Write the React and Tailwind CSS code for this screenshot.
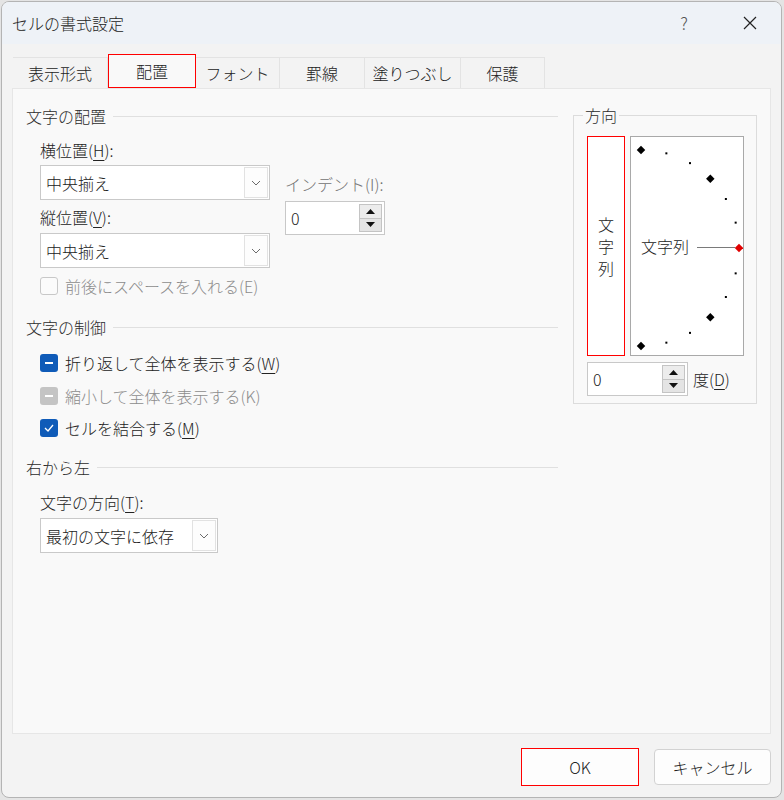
import React from "react";

const FONT = { fontFamily: '"Noto Sans CJK JP", "Noto Sans", sans-serif' };

function Chevron() {
  return (
    <svg width="10" height="6" viewBox="0 0 10 6">
      <polyline points="1,1 5,5 9,1" fill="none" stroke="#6b6b6b" strokeWidth="1" />
    </svg>
  );
}

function Select({ value, width }) {
  return (
    <div className={`flex items-center h-[35px] bg-white border border-[#c9c9c9] ${width}`}>
      <span className="flex-1 pl-[5px] text-[16px] leading-[20px] text-[#222]">{value}</span>
      <div className="flex items-center justify-center w-[24px] h-[31px] mr-[1px] bg-[#fdfdfd] border border-[#e2e2e2]">
        <Chevron />
      </div>
    </div>
  );
}

function Spin({ width }) {
  return (
    <div className={`flex items-center h-[34px] bg-white border border-[#c8c8c8] ${width}`}>
      <span className="flex-1 pl-[5px] text-[16px] leading-[20px] text-[#222]">0</span>
      <div className="flex flex-col w-[23px] h-[28px] mr-[2px] border border-[#c4c4c4]">
        <div className="flex-1 flex items-center justify-center bg-[#ececec] border-b border-[#c4c4c4]">
          <svg width="9" height="5" viewBox="0 0 9 5"><polygon points="0,5 9,5 4.5,0" fill="#111" /></svg>
        </div>
        <div className="flex-1 flex items-center justify-center bg-[#e4e4e4]">
          <svg width="9" height="5" viewBox="0 0 9 5"><polygon points="0,0 9,0 4.5,5" fill="#111" /></svg>
        </div>
      </div>
    </div>
  );
}

function SectionHeader({ children }) {
  return (
    <div className="flex items-center gap-[7px] h-[20px]">
      <span className="text-[16px] leading-[20px] text-[#2b2b2b]">{children}</span>
      <div className="flex-1 h-px bg-[#e0e0e0]" />
    </div>
  );
}

function CheckRow({ state, disabled, children, className }) {
  let box;
  if (state === "dash") {
    box = (
      <div className={`w-[18px] h-[18px] rounded-[3px] flex items-center justify-center ${disabled ? "bg-[#c4c4c4]" : "bg-[#0f5bb8]"}`}>
        <div className="w-[8px] h-[2px] bg-white" />
      </div>
    );
  } else if (state === "check") {
    box = (
      <div className="w-[18px] h-[18px] rounded-[3px] flex items-center justify-center bg-[#0f5bb8]">
        <svg width="10" height="8" viewBox="0 0 10 8">
          <polyline points="1,4 4,7 9,1" fill="none" stroke="white" strokeWidth="1.3" />
        </svg>
      </div>
    );
  } else {
    box = <div className="w-[18px] h-[18px] rounded-[3px] border border-[#c8c8c8] bg-[#fbfbfb]" />;
  }
  return (
    <div className={`flex items-center gap-[7px] h-[20px] ${className || ""}`}>
      {box}
      <span className={`text-[16px] leading-[20px] ${disabled ? "text-[#8c8c8c]" : "text-[#222]"}`}>{children}</span>
    </div>
  );
}

function Dial() {
  const cx = 10;
  const cy = 111;
  const r = 98;
  const marks = [];
  for (let a = -90; a <= 90; a += 15) {
    const rad = (a * Math.PI) / 180;
    const x = cx + r * Math.cos(rad);
    const y = cy - r * Math.sin(rad);
    const big = a % 45 === 0;
    if (a === 0) {
      marks.push(<rect key={a} x={x - 3} y={y - 3} width="6" height="6" fill="#e00000" transform={`rotate(45 ${x} ${y})`} />);
    } else if (big) {
      marks.push(<rect key={a} x={x - 3} y={y - 3} width="6" height="6" fill="#000" transform={`rotate(45 ${x} ${y})`} />);
    } else {
      marks.push(<rect key={a} x={x - 1} y={y - 1} width="2" height="2" fill="#000" />);
    }
  }
  return (
    <div className="relative w-[114px] h-[220px] bg-white border border-[#a9a9a9]">
      <svg width="112" height="218" viewBox="0 0 112 218" className="absolute left-0 top-0">
        <line x1="66" y1="110.5" x2="104" y2="110.5" stroke="#7a7a7a" strokeWidth="1" />
        {marks}
      </svg>
      <div className="flex items-center h-full pl-[10px]">
        <span className="relative text-[16px] leading-[20px] text-[#222]">文字列</span>
      </div>
    </div>
  );
}

function U({ children }) {
  return <span className="underline underline-offset-[3px]">{children}</span>;
}

export default function App() {
  const tabs = ["表示形式", "配置", "フォント", "罫線", "塗りつぶし", "保護"];
  const tabW = ["w-[95px]", "w-[88px]", "w-[84px]", "w-[85px]", "w-[96px]", "w-[84px]"];
  return (
    <div className="w-[784px] h-[800px] bg-[#e4e4e4] pt-[1px] pl-[1px] font-light" style={FONT}>
      <div className="w-[781px] h-[797px] bg-[#f3f3f3] border border-[#b4b4b4] rounded-[8px] overflow-hidden flex flex-col">
        {/* title bar */}
        <div className="flex items-center h-[42px] bg-[#eef2f7] pl-[10px] pr-[16px] shrink-0">
          <span className="text-[16px] leading-[20px] text-[#222]">セルの書式設定</span>
          <span className="ml-auto text-[17px] leading-[20px] text-[#555] mr-[55px]">?</span>
          <svg width="14" height="14" viewBox="0 0 14 14" className="mr-[8px]">
            <path d="M1 1 L13 13 M13 1 L1 13" stroke="#222" strokeWidth="1.2" />
          </svg>
        </div>

        <div className="flex flex-col px-[10px] pt-[10px] pb-[10px] flex-1">
          {/* tabs */}
          <div className="flex items-end h-[34px] pl-[1px]">
            {tabs.map((t, i) =>
              i === 1 ? (
                <div key={t} className={`${tabW[i]} h-[34px] flex items-center justify-center border border-[#ff0000] bg-[#f9f9f9] text-[16px] text-[#222]`}>
                  {t}
                </div>
              ) : (
                <div key={t} className={`${tabW[i]} h-[31px] flex items-center justify-center border-t border-r border-[#e3e3e3] text-[16px] text-[#222]`}>
                  {t}
                </div>
              )
            )}
          </div>

          {/* panel */}
          <div className="h-[646px] bg-[#f9f9f9] border border-[#e6e6e6] flex pl-[13px] pt-[16px] pr-[13px]">
            {/* left column */}
            <div className="w-[532px] pt-[1px] flex flex-col">
              <SectionHeader>文字の配置</SectionHeader>
              <div className="flex pl-[14px]">
                <div className="w-[230px] flex flex-col">
                  <div className="mt-[14px] text-[16px] leading-[20px] text-[#222]">横位置(<U>H</U>):</div>
                  <div className="mt-[5px]"><Select value="中央揃え" width="w-[230px]" /></div>
                  <div className="mt-[7px] text-[16px] leading-[20px] text-[#222]">縦位置(<U>V</U>):</div>
                  <div className="mt-[6px]"><Select value="中央揃え" width="w-[230px]" /></div>
                </div>
                <div className="ml-[15px] flex flex-col">
                  <div className="mt-[48px] text-[16px] leading-[20px] text-[#727272]">インデント(I):</div>
                  <div className="mt-[7px]"><Spin width="w-[100px]" /></div>
                </div>
              </div>
              <CheckRow className="ml-[14px] mt-[8px]" disabled>前後にスペースを入れる(E)</CheckRow>

              <div className="mt-[21px]"><SectionHeader>文字の制御</SectionHeader></div>
              <CheckRow className="ml-[14px] mt-[16px]" state="dash">折り返して全体を表示する(<U>W</U>)</CheckRow>
              <CheckRow className="ml-[14px] mt-[13px]" state="dash" disabled>縮小して全体を表示する(K)</CheckRow>
              <CheckRow className="ml-[14px] mt-[12px]" state="check">セルを結合する(<U>M</U>)</CheckRow>

              <div className="mt-[19px]"><SectionHeader>右から左</SectionHeader></div>
              <div className="ml-[14px] mt-[15px] text-[16px] leading-[20px] text-[#222]">文字の方向(<U>T</U>):</div>
              <div className="ml-[14px] mt-[6px]"><Select value="最初の文字に依存" width="w-[178px]" /></div>
            </div>

            {/* right column */}
            <div className="ml-[15px] w-[184px]">
              <fieldset className="border border-[#dcdcdc] p-0 pl-[13px] pb-[7px] m-0">
                <legend className="ml-[-4px] px-[2px] text-[16px] leading-[20px] text-[#2b2b2b]">方向</legend>
                <div className="flex gap-[5px] mt-[11px]">
                  <div className="w-[38px] h-[220px] bg-white border border-[#ff0000] flex flex-col items-center justify-center">
                    <span className="text-[16px] leading-[22px] text-[#222]">文</span>
                    <span className="text-[16px] leading-[22px] text-[#222]">字</span>
                    <span className="text-[16px] leading-[22px] text-[#222]">列</span>
                  </div>
                  <Dial />
                </div>
                <div className="flex items-center mt-[6px]">
                  <Spin width="w-[101px]" />
                  <span className="ml-[5px] text-[16px] leading-[20px] text-[#222]">度(<U>D</U>)</span>
                </div>
              </fieldset>
            </div>
          </div>

          {/* buttons */}
          <div className="flex justify-end items-center gap-[15px] mt-[14px]">
            <button className="w-[118px] h-[38px] bg-[#fdfdfd] border border-[#ff0000] text-[16px] text-[#222]">OK</button>
            <button className="w-[117px] h-[36px] bg-[#fdfdfd] border border-[#d2d2d2] rounded-[4px] text-[16px] text-[#222]">キャンセル</button>
          </div>
        </div>
      </div>
    </div>
  );
}
